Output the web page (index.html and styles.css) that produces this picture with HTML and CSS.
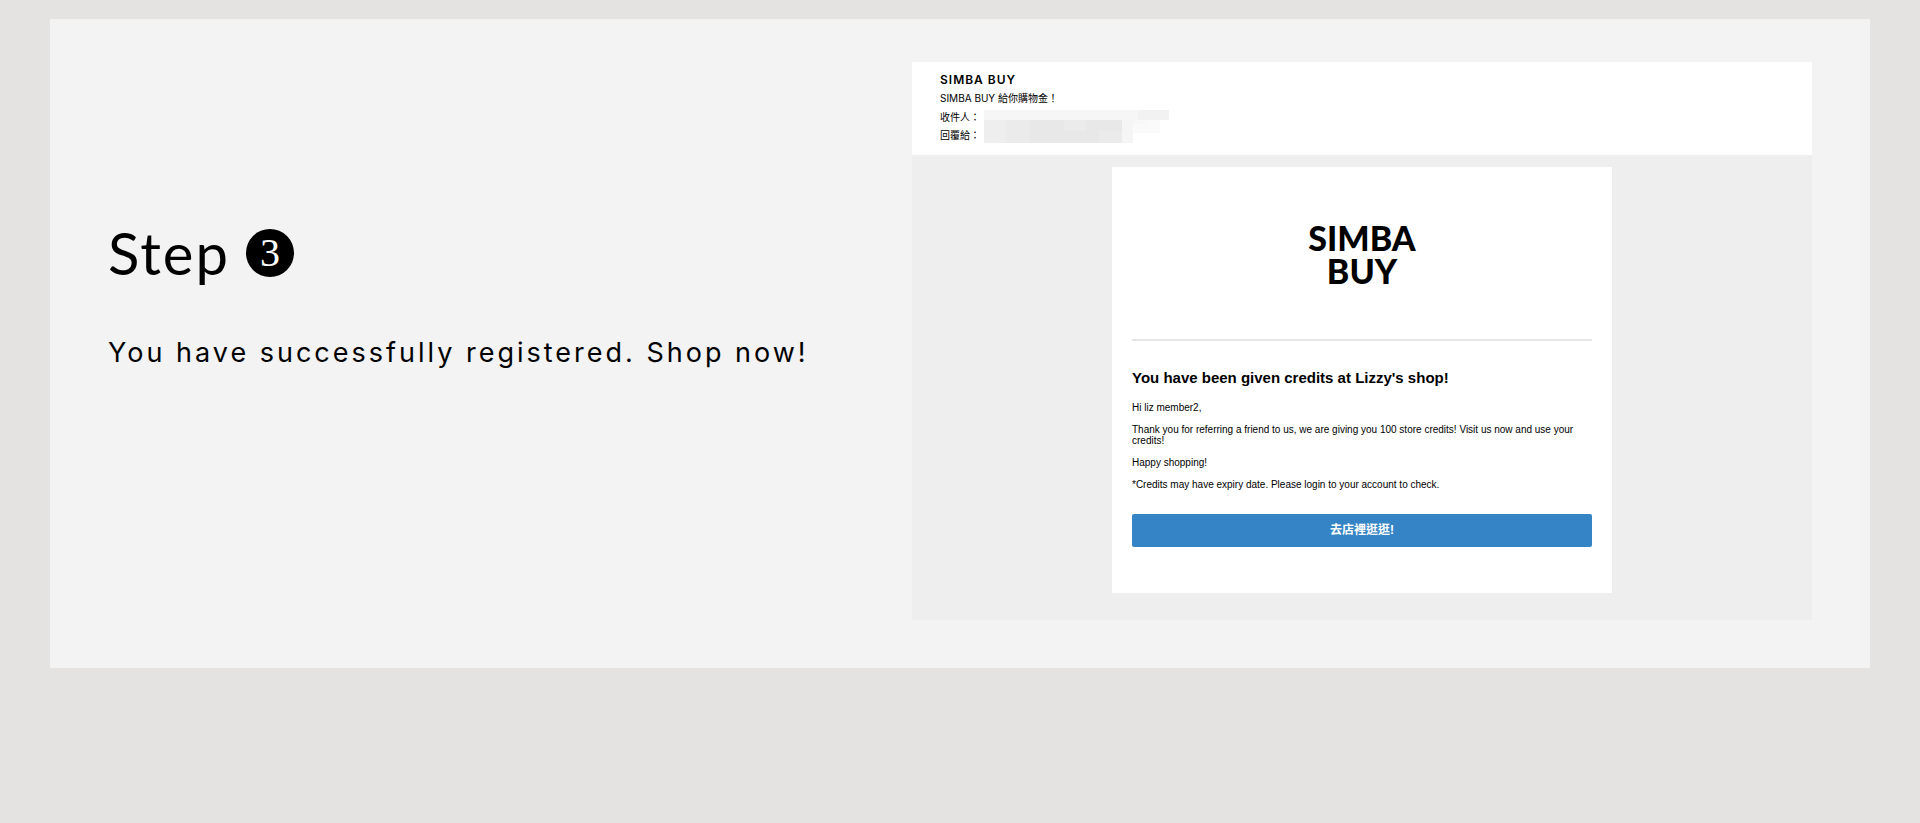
FILE: index.html
```
<!DOCTYPE html>
<html lang="en">
<head>
    <meta charset="UTF-8">
    <meta name="viewport" content="width=device-width, initial-scale=1.0">
    <title>SIMBA BUY - Step 3</title>
    <link rel="stylesheet" href="styles.css">
</head>
<body>
    <main class="step-card">
        <!-- Step text -->
        <section class="step-text">
            <h1 class="step-title">Step <span class="step-number">3</span></h1>
            <p class="step-info">You have successfully registered. Shop now!</p>
        </section>

        <!-- Email preview -->
        <section class="email">
            <header class="email-header">
                <h2 class="sender">SIMBA BUY</h2>
                <p>SIMBA BUY <span lang="zh-Hant">給你購物金！</span></p>
                <div class="recipients">
                    <div class="labels" lang="zh-Hant">
                        <p>收件人：</p>
                        <p>回覆給：</p>
                    </div>
                    <!-- Hidden addresses -->
                    <svg class="hidden-address" width="185" height="33" viewBox="0 0 185 33" aria-hidden="true">
                        <path fill="#f6f6f6" d="M0 0h154v10H0z"/>
                        <path fill="#f2f2f2" d="M154 0h31v10h-31z"/>
                        <path fill="#fafafa" d="M149 10h27v13h-27z"/>
                        <path fill="#f5f5f5" d="M138 10h11v23h-11z"/>
                        <path fill="#f8f8f8" d="M149 10h13v4h-13z"/>
                        <path fill="#eee" d="M0 10h46v23H0z"/>
                        <path fill="#e8e8e8" d="M46 10h92v23H46z"/>
                        <path fill="#ebebeb" d="M22 10h24v23H22zM80 10h22v11H80zM115 21h23v12h-23z"/>
                    </svg>
                </div>
            </header>

            <div class="email-body">
                <article class="message">
                    <div class="logo">SIMBA<br>BUY</div>
                    <h3>You have been given credits at Lizzy's shop!</h3>
                    <p>Hi liz member2,</p>
                    <p>Thank you for referring a friend to us, we are giving you 100 store credits! Visit us now and use your credits!</p>
                    <p>Happy shopping!</p>
                    <p>*Credits may have expiry date. Please login to your account to check.</p>
                    <a href="#" class="shop-button" lang="zh-Hant">去店裡逛逛!</a>
                </article>
            </div>
        </section>
    </main>
</body>
</html>
```
FILE: styles.css
```
/* General Styling */
* {
    box-sizing: border-box;
}

body {
    margin: 0;
    padding: 19px 50px;
    background: #e4e3e1;
    color: #000;
    font-family: Inter, "Noto Sans CJK TC", sans-serif;
}

h1, h2, h3, p {
    margin: 0;
}

/* Step Card */
.step-card {
    display: grid;
    grid-template-columns: 67fr 75fr;
    padding: 43px 58px 48px;
    background: #f3f3f3;
}

.step-text {
    padding-top: 157px;
}

.step-title {
    display: flex;
    align-items: center;
    gap: 16px;
    font-family: Lato, sans-serif;
    font-size: 58px;
    font-weight: 400;
    line-height: 68px;
    letter-spacing: 2px;
}

.step-number {
    width: 48px;
    height: 48px;
    border-radius: 50%;
    background: #000;
    color: #fff;
    font-family: "Liberation Serif", serif;
    font-size: 40px;
    line-height: 48px;
    letter-spacing: 0;
    text-align: center;
}

.step-info {
    margin-top: 49px;
    font-size: 27px;
    line-height: 34px;
    letter-spacing: 3px;
}

/* Email Preview */
.email {
    background: #eee;
}

.email-header {
    padding: 8px 28px 11px;
    background: #fff;
    font-size: 10px;
    line-height: 19px;
}

.sender {
    font-size: 12px;
    font-weight: 600;
    line-height: 19px;
    letter-spacing: 1px;
}

.recipients {
    display: flex;
    gap: 4px;
    line-height: 18px;
}

.hidden-address {
    margin-top: 2px;
}

.email-body {
    padding: 12px 20px 27px;
}

/* Message */
.message {
    max-width: 500px;
    margin: 0 auto;
    padding: 54px 20px 46px;
    background: #fff;
    font-family: "Liberation Sans", "Noto Sans CJK TC", sans-serif;
    font-size: 10px;
    line-height: 11px;
}

.logo {
    margin-bottom: 28px;
    padding-bottom: 52px;
    border-bottom: 2px solid #e6e6e6;
    font-family: Lato, sans-serif;
    font-size: 34px;
    font-weight: 900;
    line-height: 33px;
    text-align: center;
}

.message h3 {
    margin-bottom: 15px;
    font-size: 15px;
    font-weight: 700;
    line-height: 18px;
}

.message p {
    margin-bottom: 11px;
}

.shop-button {
    display: block;
    margin-top: 24px;
    border-radius: 2px;
    background: #3585c6;
    color: #fff;
    font-size: 12px;
    font-weight: 600;
    line-height: 33px;
    text-align: center;
    text-decoration: none;
}
```
